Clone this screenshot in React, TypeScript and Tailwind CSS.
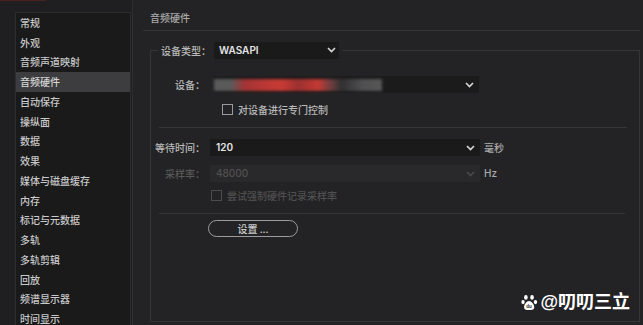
import React from 'react'

const cjk = "font-['Noto_Sans_CJK_SC','Noto_Sans',sans-serif]"

const sections = [
  '常规',
  '外观',
  '音频声道映射',
  '音频硬件',
  '自动保存',
  '操纵面',
  '数据',
  '效果',
  '媒体与磁盘缓存',
  '内存',
  '标记与元数据',
  '多轨',
  '多轨剪辑',
  '回放',
  '频谱显示器',
  '时间显示',
]

const Chevron: React.FC<{ dim?: boolean }> = ({ dim }) => (
  <svg width="9" height="6" viewBox="0 0 9 6" className="shrink-0">
    <path
      d="M1 1l3.5 3.5L8 1"
      fill="none"
      stroke={dim ? '#4a4a4a' : '#d8d8d8'}
      strokeWidth="1.6"
    />
  </svg>
)

const Paw = () => (
  <svg width="17" height="17" viewBox="0 0 16 16">
    <ellipse cx="4.6" cy="3.2" rx="1.7" ry="2.2" fill="#fff" />
    <ellipse cx="10.4" cy="3.2" rx="1.7" ry="2.2" fill="#fff" />
    <ellipse cx="1.9" cy="7.6" rx="1.6" ry="2" fill="#fff" />
    <ellipse cx="13.6" cy="7.6" rx="1.6" ry="2" fill="#fff" />
    <path d="M7.5 6.6c-2.2 0-4.6 3.4-4.6 5.8 0 1.7 1.3 2.6 2.8 2.6h3.8c1.6 0 3-.9 3-2.6 0-2.4-2.6-5.8-5-5.8z" fill="#fff" />
    <text x="7.6" y="13.4" fontSize="4.2" textAnchor="middle" fill="#222" fontWeight="bold" fontFamily="Liberation Sans, sans-serif">du</text>
  </svg>
)

const Label: React.FC<{ children: React.ReactNode; dim?: boolean }> = ({ children, dim }) => (
  <span className={`w-[54px] shrink-0 text-right ${dim ? 'text-[#575757]' : 'text-[#b9b9b9]'}`}>
    {children}
  </span>
)

export default function App() {
  return (
    <div className={`relative flex h-[325px] w-[643px] overflow-hidden bg-[#1f1f21] text-[10px] font-medium ${cjk}`}>
      <div className="absolute left-0 top-0 h-[1px] w-[46px] bg-[#4a2020]" />

      {/* sidebar */}
      <div className="pl-[15px] pt-[12px]">
        <div className="h-[330px] w-[116px] border border-[#2c2c2e] bg-[#1a1a1b]">
          {sections.map((name) => (
            <div
              key={name}
              className={`flex h-[19.75px] items-center pl-[4px] leading-none ${
                name === '音频硬件' ? 'bg-[#3d3d3f] text-[#d6d6d6]' : 'text-[#c9c9c9]'
              }`}
            >
              {name}
            </div>
          ))}
        </div>
      </div>

      {/* main panel */}
      <div className="ml-[1px] flex flex-1 flex-col border-l border-[#2e2e30] bg-[#232325] pt-[11px]">
        <div className="h-[14px] pl-[17px] leading-[14px] text-[#a9a9a9]">音频硬件</div>
        <div className="ml-[10px] mr-[3px] mt-[5px] border-t border-[#343436]" />

        <fieldset className="ml-[17px] mr-[3px] mt-[10px] h-[281px] border border-[#363638] p-0">
          <legend className="ml-[7px] flex h-[18px] items-center px-[3px]">
            <span className="text-[#b9b9b9]">设备类型：</span>
            <div className="ml-[3px] flex h-[17px] w-[125px] items-center justify-between bg-[#1a1a1b] pl-[5px] pr-[3px]">
              <span className="font-['Inter','Noto_Sans',sans-serif] text-[10px] font-semibold text-[#e4e4e4]">WASAPI</span>
              <Chevron />
            </div>
          </legend>

          <div className="mt-[17px] flex h-[17px] items-center">
            <Label>设备：</Label>
            <div className="ml-[9px] flex h-[17px] w-[265px] items-center justify-between bg-[#1b1b1c] pr-[5px]">
              <div className="h-[12px] w-[168px] bg-[linear-gradient(90deg,#5a5a5a_0%,#5a5a5a_10%,#a33434_18%,#c83a34_40%,#9c3030_50%,#c33a33_62%,#6a3d3f_70%,#303032_76%,#4f4f51_88%,#575758_100%)] blur-[1.5px]" />
              <Chevron />
            </div>
          </div>

          <div className="mt-[11px] flex h-[11px] items-center">
            <div className="ml-[71px] h-[11px] w-[11px] border border-[#9a9a9a]" />
            <span className="ml-[5px] text-[#b9b9b9]">对设备进行专门控制</span>
          </div>

          <div className="ml-[8px] mr-[12px] mt-[12px] border-t border-[#363638]" />

          <div className="mt-[11px] flex h-[17px] items-center">
            <Label>等待时间：</Label>
            <div className="ml-[5px] flex h-[17px] w-[270px] items-center justify-between bg-[#1a1a1b] pl-[6px] pr-[5px]">
              <span className="font-['Inter','Noto_Sans',sans-serif] font-semibold text-[#e4e4e4]">120</span>
              <Chevron />
            </div>
            <span className="ml-[4px] text-[#a9a9a9]">毫秒</span>
          </div>

          <div className="mt-[9px] flex h-[17px] items-center">
            <Label dim>采样率：</Label>
            <div className="ml-[5px] flex h-[17px] w-[270px] items-center justify-between bg-[#29292b] pl-[6px] pr-[5px]">
              <span className="font-['Inter','Noto_Sans',sans-serif] text-[#505050]">48000</span>
              <Chevron dim />
            </div>
            <span className="ml-[4px] font-['Inter','Noto_Sans',sans-serif] text-[#a9a9a9]">Hz</span>
          </div>

          <div className="mt-[8px] flex h-[11px] items-center">
            <div className="ml-[60px] h-[11px] w-[11px] border border-[#4c4c4c]" />
            <span className="ml-[5px] text-[#4f4f4f]">尝试强制硬件记录采样率</span>
          </div>

          <div className="ml-[8px] mr-[14px] mt-[12px] border-t border-[#363638]" />

          <button className="ml-[57px] mt-[6px] flex h-[17px] w-[90px] items-center justify-center rounded-full border-[1.5px] border-[#9c9c9c] text-[#c9c9c9]">
            设置 ...
          </button>
        </fieldset>
      </div>

      {/* watermark */}
      <div className="absolute bottom-[14px] right-[13px] flex items-center gap-[2px] text-[18px] font-semibold leading-none text-white">
        <Paw />
        <span className="font-['Liberation_Sans','Noto_Sans_CJK_SC',sans-serif]">@叨叨三立</span>
      </div>
    </div>
  )
}
